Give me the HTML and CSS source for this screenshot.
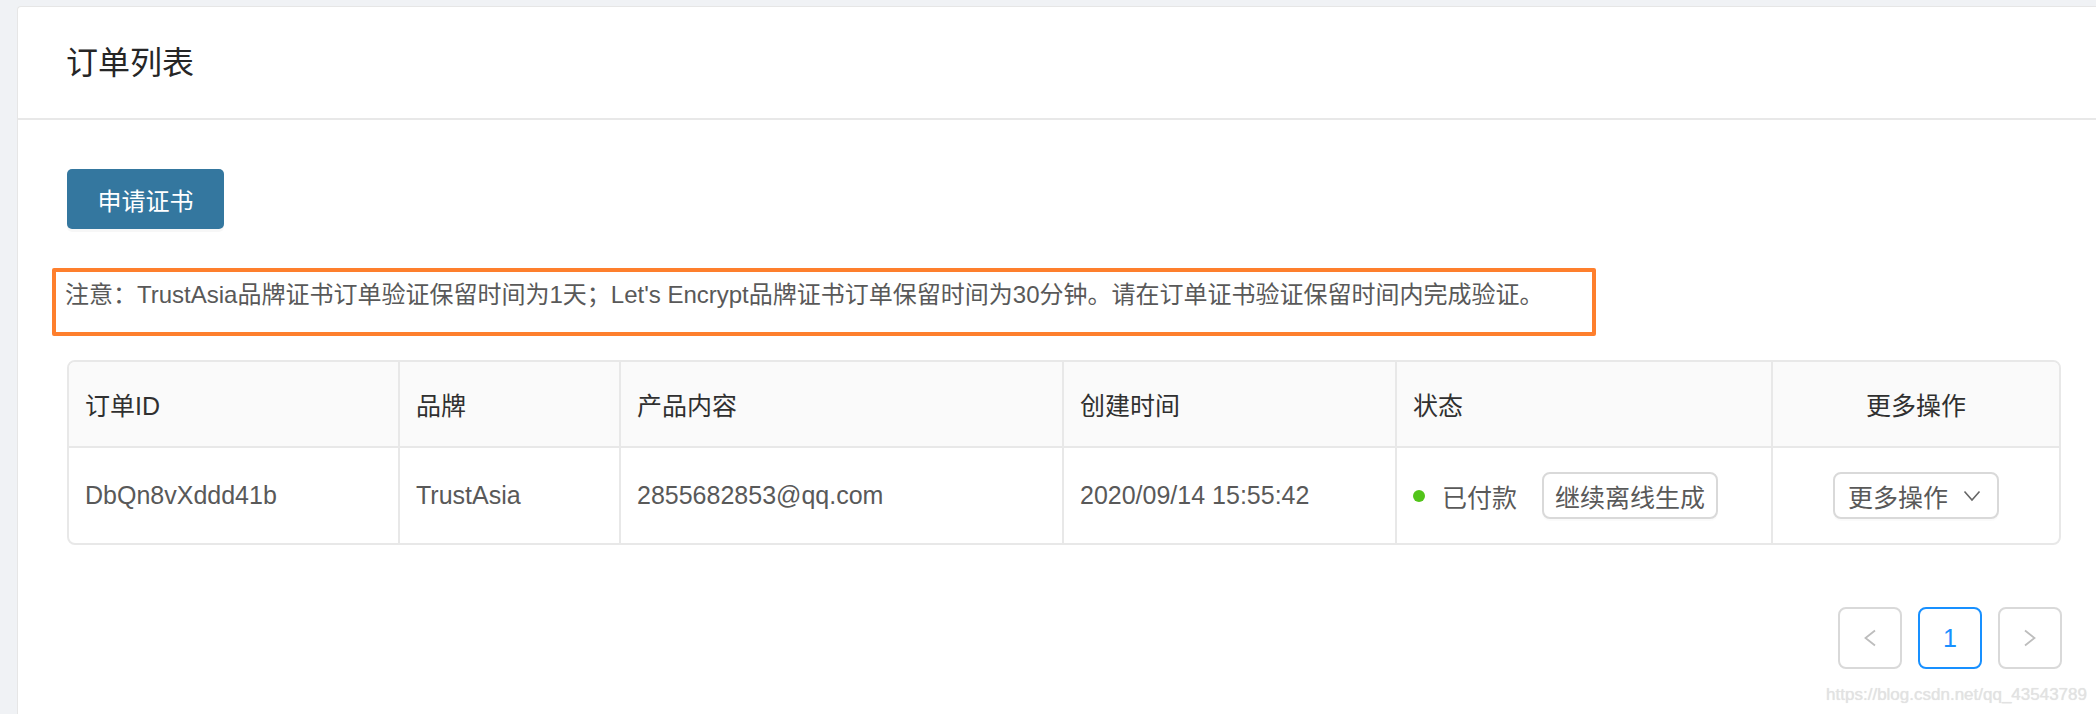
FILE: index.html
```html
<!DOCTYPE html>
<html lang="zh-CN">
<head>
  <meta charset="UTF-8"/>
  <title>订单列表</title>
  <link rel="stylesheet" href="styles.css">
</head>
<body>
  <div class="page">
    <div class="card">
      <div class="card-head">
        <h1>订单列表</h1>
      </div>

      <div class="card-body">
        <button class="btn-primary">申请证书</button>

        <p class="notice">注意：TrustAsia品牌证书订单验证保留时间为1天；Let's Encrypt品牌证书订单保留时间为30分钟。请在订单证书验证保留时间内完成验证。</p>

        <div class="orders">
          <div class="row head">
            <div class="cell">订单ID</div>
            <div class="cell">品牌</div>
            <div class="cell">产品内容</div>
            <div class="cell">创建时间</div>
            <div class="cell">状态</div>
            <div class="cell center">更多操作</div>
          </div>
          <div class="row">
            <div class="cell">DbQn8vXddd41b</div>
            <div class="cell">TrustAsia</div>
            <div class="cell">2855682853@qq.com</div>
            <div class="cell">2020/09/14 15:55:42</div>
            <div class="cell">
              <span class="dot"></span>
              <span class="status-text">已付款</span>
              <button class="btn">继续离线生成</button>
            </div>
            <div class="cell center">
              <button class="btn dropdown">更多操作
                <svg width="18" height="12" viewBox="0 0 18 12"><polyline points="1.5,1.5 9,10 16.5,1.5" fill="none" stroke="#666" stroke-width="1.6"/></svg>
              </button>
            </div>
          </div>
        </div>

        <div class="pager">
          <button class="page-btn">
            <svg width="14" height="18" viewBox="0 0 14 18"><polyline points="12,1.5 2.5,9 12,16.5" fill="none" stroke="#bdbdbd" stroke-width="1.8"/></svg>
          </button>
          <button class="page-btn active">1</button>
          <button class="page-btn">
            <svg width="14" height="18" viewBox="0 0 14 18"><polyline points="2,1.5 11.5,9 2,16.5" fill="none" stroke="#bdbdbd" stroke-width="1.8"/></svg>
          </button>
        </div>
      </div>
    </div>

    <div class="watermark">https://blog.csdn.net/qq_43543789</div>
  </div>
</body>
</html>
```

FILE: styles.css
```css
* { box-sizing: border-box; margin: 0; padding: 0; }

html, body {
  height: 100%;
  overflow: hidden;
}

body {
  background: #f0f2f5;
  font-family: "Liberation Sans", "Noto Sans CJK SC", sans-serif;
  color: #595959;
}

.page {
  position: relative;
  height: 714px;
  overflow: hidden;
  padding: 6px 0 0 17px;
}

/* card runs past the bottom and right edge of the window */
.card {
  background: #fff;
  border: 1px solid #e6e6e6;
  border-right: none;
  border-radius: 4px 0 0 0;
  height: 760px;
}

.card-head {
  height: 113px;
  display: flex;
  align-items: center;
  padding-left: 48px;
  border-bottom: 2px solid #e8e8e8;
}

.card-head h1 {
  font-size: 32px;
  font-weight: normal;
  color: #262626;
  line-height: 40px;
}

.card-body {
  padding: 49px 35px 0 49px;
}

button {
  font-family: inherit;
  cursor: pointer;
}

.btn-primary {
  width: 157px;
  height: 60px;
  background: #34779f;
  color: #fff;
  border: none;
  border-radius: 5px;
  font-size: 24px;
  box-shadow: 0 3px 0 rgba(0, 0, 0, 0.03);
}

.notice {
  width: 1544px;
  margin: 39px 0 0 -15px;
  padding: 8px 0 22px 9px;
  border: 4px solid #fe7f2d;
  border-radius: 2px;
  font-size: 24px;
  line-height: 30px;
  color: #595959;
  white-space: nowrap;
}

.orders {
  margin-top: 24px;
  border: 2px solid #e8e8e8;
  border-radius: 8px;
  overflow: hidden;
}

.row {
  display: grid;
  grid-template-columns: 331px 221px 443px 333px 376px 286px;
  height: 95px;
}

.row.head {
  height: 86px;
  background: #fafafa;
  border-bottom: 2px solid #e8e8e8;
  color: #303030;
}

.cell {
  display: flex;
  align-items: center;
  padding-left: 16px;
  border-right: 2px solid #e8e8e8;
  font-size: 25px;
  white-space: nowrap;
}

.cell:last-child { border-right: none; }

.cell.center {
  justify-content: center;
  padding-left: 0;
}

.dot {
  width: 12px;
  height: 12px;
  border-radius: 50%;
  background: #52c41a;
  margin-right: 17px;
}

.status-text { margin-right: 25px; }

.btn {
  height: 47px;
  padding: 0 11px;
  background: #fff;
  border: 2px solid #d9d9d9;
  border-radius: 8px;
  font-size: 25px;
  color: #595959;
  box-shadow: 0 2px 0 rgba(0, 0, 0, 0.02);
}

.dropdown {
  display: flex;
  align-items: center;
  gap: 15px;
  padding: 0 16px 0 13px;
}

.pager {
  display: flex;
  justify-content: flex-end;
  gap: 16px;
  margin-top: 62px;
  margin-right: -1px;
}

.page-btn {
  width: 64px;
  height: 62px;
  background: #fff;
  border: 2px solid #d9d9d9;
  border-radius: 8px;
  display: flex;
  align-items: center;
  justify-content: center;
  font-size: 25px;
  color: #595959;
}

.page-btn.active {
  border-color: #1890ff;
  color: #1890ff;
}

.watermark {
  position: absolute;
  right: 9px;
  top: 685px;
  font-size: 17px;
  color: #e2e2e2;
  text-shadow: 0 0 1px rgba(0, 0, 0, 0.12);
}
```
